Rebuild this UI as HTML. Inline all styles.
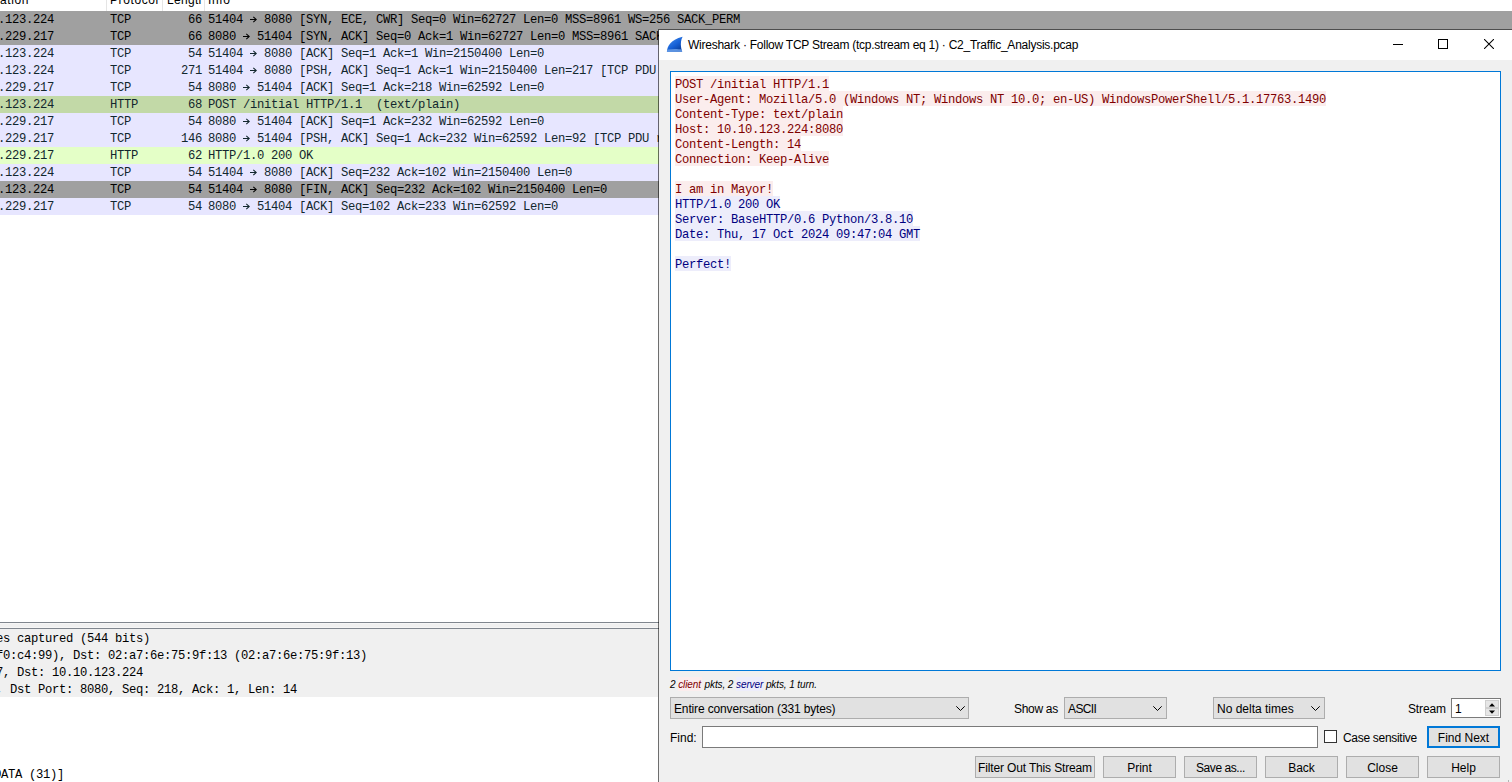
<!DOCTYPE html>
<html><head><meta charset="utf-8">
<style>
*{margin:0;padding:0;box-sizing:border-box}
html,body{width:1512px;height:782px;overflow:hidden;background:#fff}
body{position:relative;font-family:"Liberation Sans",sans-serif;font-size:12px;color:#000}
.a{position:absolute;white-space:pre}
.m{font-family:"Liberation Mono",monospace;font-size:12.2px;letter-spacing:-0.3125px}
#hdr{position:absolute;left:0;top:0;width:1512px;height:11px;background:#fff;overflow:hidden}
.hs{position:absolute;top:0;width:1px;height:11px;background:#e5e5e5}
.row{position:absolute;left:0;width:1512px;height:17px;color:#12272e}
.row span{position:absolute;top:1px;line-height:17px;white-space:pre}
.ar{vertical-align:top;position:relative;top:-1px}
.g{background:#a0a0a0;color:#000}
.t{background:#e7e6ff}
.h{background:#e4ffc7}
.s{background:#c2d9a7}
.sl{position:absolute;left:0;height:15px;line-height:19px;white-space:pre}
.c{color:#7f0000;background:#fbeded}
.sv{color:#00007f;background:#ededfb}
.cb{background:#e1e1e1;border:1px solid #adadad}
.ct{position:absolute;left:3px;top:4px;line-height:14px;font-size:12px;white-space:pre}
.chev{position:absolute;top:8px}
.lbl{line-height:14px;font-size:12px}
.btn{background:#e1e1e1;border:1px solid #adadad;display:flex;align-items:center;justify-content:center}
.btn span{font-size:12px;line-height:14px;white-space:pre;position:relative;top:1px}
</style></head><body>

<div id="hdr">
  <div class="a" style="left:0;top:-8px;line-height:17px;letter-spacing:0.6px">ation</div>
  <div class="hs" style="left:106px"></div>
  <div class="a" style="left:110px;top:-8px;line-height:17px;letter-spacing:0.6px">Protocol</div>
  <div class="hs" style="left:162px"></div>
  <div class="a" style="left:167px;top:-8px;line-height:17px;width:35px;overflow:hidden;letter-spacing:0.3px">Length</div>
  <div class="hs" style="left:204px"></div>
  <div class="a" style="left:208px;top:-8px;line-height:17px;letter-spacing:0.6px">Info</div>
</div>

<div id="plist" class="m">
<div class="row g" style="top:11px"><span style="left:-2px">.123.224</span><span style="left:110px">TCP</span><span style="left:188px">66</span><span style="left:208px">51404 <svg class="ar" width="7" height="17" viewBox="0 0 7 17"><path d="M0 8.5 H6.3 M3.3 5.9 L6.3 8.5 L3.3 11.1" stroke="currentColor" stroke-width="1.05" fill="none"/></svg> 8080 [SYN, ECE, CWR] Seq=0 Win=62727 Len=0 MSS=8961 WS=256 SACK_PERM</span></div>
<div class="row g" style="top:28px"><span style="left:-2px">.229.217</span><span style="left:110px">TCP</span><span style="left:188px">66</span><span style="left:208px">8080 <svg class="ar" width="7" height="17" viewBox="0 0 7 17"><path d="M0 8.5 H6.3 M3.3 5.9 L6.3 8.5 L3.3 11.1" stroke="currentColor" stroke-width="1.05" fill="none"/></svg> 51404 [SYN, ACK] Seq=0 Ack=1 Win=62727 Len=0 MSS=8961 SACK_PERM</span></div>
<div class="row t" style="top:45px"><span style="left:-2px">.123.224</span><span style="left:110px">TCP</span><span style="left:188px">54</span><span style="left:208px">51404 <svg class="ar" width="7" height="17" viewBox="0 0 7 17"><path d="M0 8.5 H6.3 M3.3 5.9 L6.3 8.5 L3.3 11.1" stroke="currentColor" stroke-width="1.05" fill="none"/></svg> 8080 [ACK] Seq=1 Ack=1 Win=2150400 Len=0</span></div>
<div class="row t" style="top:62px"><span style="left:-2px">.123.224</span><span style="left:110px">TCP</span><span style="left:181px">271</span><span style="left:208px">51404 <svg class="ar" width="7" height="17" viewBox="0 0 7 17"><path d="M0 8.5 H6.3 M3.3 5.9 L6.3 8.5 L3.3 11.1" stroke="currentColor" stroke-width="1.05" fill="none"/></svg> 8080 [PSH, ACK] Seq=1 Ack=1 Win=2150400 Len=217 [TCP PDU reassembled in 6]</span></div>
<div class="row t" style="top:79px"><span style="left:-2px">.229.217</span><span style="left:110px">TCP</span><span style="left:188px">54</span><span style="left:208px">8080 <svg class="ar" width="7" height="17" viewBox="0 0 7 17"><path d="M0 8.5 H6.3 M3.3 5.9 L6.3 8.5 L3.3 11.1" stroke="currentColor" stroke-width="1.05" fill="none"/></svg> 51404 [ACK] Seq=1 Ack=218 Win=62592 Len=0</span></div>
<div class="row s" style="top:96px"><span style="left:-2px">.123.224</span><span style="left:110px">HTTP</span><span style="left:188px">68</span><span style="left:208px">POST /initial HTTP/1.1  (text/plain)</span></div>
<div class="row t" style="top:113px"><span style="left:-2px">.229.217</span><span style="left:110px">TCP</span><span style="left:188px">54</span><span style="left:208px">8080 <svg class="ar" width="7" height="17" viewBox="0 0 7 17"><path d="M0 8.5 H6.3 M3.3 5.9 L6.3 8.5 L3.3 11.1" stroke="currentColor" stroke-width="1.05" fill="none"/></svg> 51404 [ACK] Seq=1 Ack=232 Win=62592 Len=0</span></div>
<div class="row t" style="top:130px"><span style="left:-2px">.229.217</span><span style="left:110px">TCP</span><span style="left:181px">146</span><span style="left:208px">8080 <svg class="ar" width="7" height="17" viewBox="0 0 7 17"><path d="M0 8.5 H6.3 M3.3 5.9 L6.3 8.5 L3.3 11.1" stroke="currentColor" stroke-width="1.05" fill="none"/></svg> 51404 [PSH, ACK] Seq=1 Ack=232 Win=62592 Len=92 [TCP PDU reassembled in 9]</span></div>
<div class="row h" style="top:147px"><span style="left:-2px">.229.217</span><span style="left:110px">HTTP</span><span style="left:188px">62</span><span style="left:208px">HTTP/1.0 200 OK</span></div>
<div class="row t" style="top:164px"><span style="left:-2px">.123.224</span><span style="left:110px">TCP</span><span style="left:188px">54</span><span style="left:208px">51404 <svg class="ar" width="7" height="17" viewBox="0 0 7 17"><path d="M0 8.5 H6.3 M3.3 5.9 L6.3 8.5 L3.3 11.1" stroke="currentColor" stroke-width="1.05" fill="none"/></svg> 8080 [ACK] Seq=232 Ack=102 Win=2150400 Len=0</span></div>
<div class="row g" style="top:181px"><span style="left:-2px">.123.224</span><span style="left:110px">TCP</span><span style="left:188px">54</span><span style="left:208px">51404 <svg class="ar" width="7" height="17" viewBox="0 0 7 17"><path d="M0 8.5 H6.3 M3.3 5.9 L6.3 8.5 L3.3 11.1" stroke="currentColor" stroke-width="1.05" fill="none"/></svg> 8080 [FIN, ACK] Seq=232 Ack=102 Win=2150400 Len=0</span></div>
<div class="row t" style="top:198px"><span style="left:-2px">.229.217</span><span style="left:110px">TCP</span><span style="left:188px">54</span><span style="left:208px">8080 <svg class="ar" width="7" height="17" viewBox="0 0 7 17"><path d="M0 8.5 H6.3 M3.3 5.9 L6.3 8.5 L3.3 11.1" stroke="currentColor" stroke-width="1.05" fill="none"/></svg> 51404 [ACK] Seq=102 Ack=233 Win=62592 Len=0</span></div>
</div>

<!-- splitter -->
<div class="a" style="left:0;top:622px;width:659px;height:1px;background:#80868e"></div>
<div class="a" style="left:0;top:623px;width:658px;height:5px;background:#f0f0f0;border-top:1px solid #f6f6f6;border-bottom:1px solid #f6f6f6"></div>
<div class="a" style="left:0;top:628px;width:659px;height:1px;background:#80868e"></div>

<!-- details -->
<div class="a m" style="left:0;top:629px;width:658px;height:68px;background:#f0f0f0;color:#000">
  <div class="a" style="left:-4px;top:2px;line-height:17px">es captured (544 bits)</div>
  <div class="a" style="left:-4px;top:19px;line-height:17px">f0:c4:99), Dst: 02:a7:6e:75:9f:13 (02:a7:6e:75:9f:13)</div>
  <div class="a" style="left:-4px;top:36px;line-height:17px">7, Dst: 10.10.123.224</div>
  <div class="a" style="left:-4px;top:53px;line-height:17px">, Dst Port: 8080, Seq: 218, Ack: 1, Len: 14</div>
</div>
<div class="a m" style="left:-6px;top:767px;line-height:17px">DATA (31)]</div>

<!-- dialog -->
<div id="dlg" class="a" style="left:658px;top:29px;width:854px;height:753px;background:#f0f0f0;background-clip:padding-box;border-left:1px solid rgba(0,0,0,0.57);border-top:1px solid #4e4e4e">
  <div class="a" style="left:0;top:0;width:853px;height:30px;background:#fff"></div>
  <svg class="a" style="left:7px;top:6px" width="18" height="17" viewBox="0 0 18 17">
    <defs><linearGradient id="fg" x1="0.2" y1="0.1" x2="0.8" y2="0.9"><stop offset="0" stop-color="#3d86ea"/><stop offset="0.55" stop-color="#1560d6"/><stop offset="1" stop-color="#0a3f9e"/></linearGradient></defs>
    <path d="M16.6 0.7 C15 3.5 14.6 7.5 15 10.5 C15.3 13 15.8 14.5 16.2 15.9 L0.9 15.9 C1.4 10 4 4 16.6 0.7 Z" fill="url(#fg)"/>
    <path d="M1.3 13.6 C6 12.8 12 12.8 15.7 13.6 L16.2 15.9 L0.9 15.9 Z" fill="#6a9fe8" opacity="0.85"/>
  </svg>
  <div class="a" id="title" style="left:29px;top:8px;line-height:14px;font-size:12px;letter-spacing:-0.245px">Wireshark · Follow TCP Stream (tcp.stream eq 1) · C2_Traffic_Analysis.pcap</div>
  <!-- window controls -->
  <div class="a" style="left:734px;top:14px;width:10px;height:1px;background:#000"></div>
  <div class="a" style="left:779px;top:9px;width:10px;height:10px;border:1px solid #000"></div>
  <svg class="a" style="left:825px;top:9px" width="10" height="10" viewBox="0 0 10 10"><path d="M0 0 L10 10 M10 0 L0 10" stroke="#000" stroke-width="1.05" fill="none"/></svg>

  <!-- text area -->
  <div class="a" style="left:11px;top:41px;width:831px;height:600px;background:#fff;border:1px solid #0078d7"></div>
  <div class="a m" id="stream" style="left:16px;top:46px">
    <div class="sl c" style="top:0">POST /initial HTTP/1.1</div>
    <div class="sl c" style="top:15px">User-Agent: Mozilla/5.0 (Windows NT; Windows NT 10.0; en-US) WindowsPowerShell/5.1.17763.1490</div>
    <div class="sl c" style="top:30px">Content-Type: text/plain</div>
    <div class="sl c" style="top:45px">Host: 10.10.123.224:8080</div>
    <div class="sl c" style="top:60px">Content-Length: 14</div>
    <div class="sl c" style="top:75px">Connection: Keep-Alive</div>
    <div class="sl c" style="top:105px">I am in Mayor!</div>
    <div class="sl sv" style="top:120px">HTTP/1.0 200 OK</div>
    <div class="sl sv" style="top:135px">Server: BaseHTTP/0.6 Python/3.8.10</div>
    <div class="sl sv" style="top:150px">Date: Thu, 17 Oct 2024 09:47:04 GMT</div>
    <div class="sl sv" style="top:180px">Perfect!</div>
  </div>

  <!-- stats -->
  <div class="a" id="stats" style="left:11px;top:648px;line-height:13px;font-size:10px;font-style:italic;letter-spacing:-0.1px"><span>2 </span><span style="color:#7f0000;background:#fbeded;padding:2px 1px 1px 0">client</span><span> pkts, 2 </span><span style="color:#00007f;background:#ededfb;padding:2px 0 1px 0">server</span><span> pkts, 1 turn.</span></div>

  <!-- combos -->
  <div class="a cb" style="left:11px;top:667px;width:299px;height:22px"><span class="ct" id="c1" style="letter-spacing:-0.15px">Entire conversation (331 bytes)</span><svg class="chev" style="left:285px" width="9" height="5" viewBox="0 0 9 5"><path d="M0.3 0.3 L4.5 4.5 L8.7 0.3" stroke="#000" fill="none" stroke-width="1"/></svg></div>
  <div class="a lbl" id="showas" style="left:355px;top:672px;letter-spacing:-0.3px">Show as</div>
  <div class="a cb" style="left:405px;top:667px;width:103px;height:22px"><span class="ct" style="letter-spacing:-0.6px">ASCII</span><svg class="chev" style="left:88px" width="9" height="5" viewBox="0 0 9 5"><path d="M0.3 0.3 L4.5 4.5 L8.7 0.3" stroke="#000" fill="none" stroke-width="1"/></svg></div>
  <div class="a cb" style="left:554px;top:667px;width:112px;height:22px"><span class="ct" id="c3">No delta times</span><svg class="chev" style="left:97px" width="9" height="5" viewBox="0 0 9 5"><path d="M0.3 0.3 L4.5 4.5 L8.7 0.3" stroke="#000" fill="none" stroke-width="1"/></svg></div>
  <div class="a lbl" id="streaml" style="left:749px;top:672px;letter-spacing:-0.15px">Stream</div>
  <div class="a" style="left:792px;top:668px;width:50px;height:20px;background:#fff;border:1px solid #7a7a7a">
    <div class="a" style="left:3px;top:3px;line-height:14px;font-size:12px">1</div>
    <div class="a" style="left:33px;top:1px;width:14px;height:8px;background:#e6e6e6;border:1px solid #cfcfcf"></div>
    <div class="a" style="left:33px;top:9px;width:14px;height:8px;background:#e6e6e6;border:1px solid #cfcfcf"></div>
    <svg class="a" style="left:37px;top:4px" width="6" height="4" viewBox="0 0 6 4"><path d="M0 3.5 L3 0.3 L6 3.5 Z" fill="#000"/></svg>
    <svg class="a" style="left:37px;top:11px" width="6" height="4" viewBox="0 0 6 4"><path d="M0 0.5 L3 3.7 L6 0.5 Z" fill="#000"/></svg>
  </div>

  <!-- find row -->
  <div class="a lbl" style="left:11px;top:701px">Find:</div>
  <div class="a" style="left:43px;top:696px;width:616px;height:22px;background:#fff;border:1px solid #7a7a7a"></div>
  <div class="a" style="left:665px;top:700px;width:13px;height:13px;background:#fff;border:1px solid #333"></div>
  <div class="a lbl" id="casel" style="left:684px;top:701px;letter-spacing:-0.3px">Case sensitive</div>
  <div class="a btn" style="left:768px;top:696px;width:73px;height:22px;border:2px solid #0078d7"><span>Find Next</span></div>

  <!-- buttons -->
  <div class="a btn" style="left:316px;top:726px;width:120px;height:22px"><span style="letter-spacing:-0.15px">Filter Out This Stream</span></div>
  <div class="a btn" style="left:444px;top:726px;width:73px;height:22px"><span>Print</span></div>
  <div class="a btn" style="left:525px;top:726px;width:73px;height:22px"><span style="letter-spacing:-0.45px">Save as...</span></div>
  <div class="a btn" style="left:606px;top:726px;width:73px;height:22px"><span>Back</span></div>
  <div class="a btn" style="left:687px;top:726px;width:73px;height:22px"><span>Close</span></div>
  <div class="a btn" style="left:768px;top:726px;width:73px;height:22px"><span>Help</span></div>
  <div class="a" style="left:849px;top:750px;width:1px;height:3px;background:#b4b4b4"></div>
</div>

</body></html>
